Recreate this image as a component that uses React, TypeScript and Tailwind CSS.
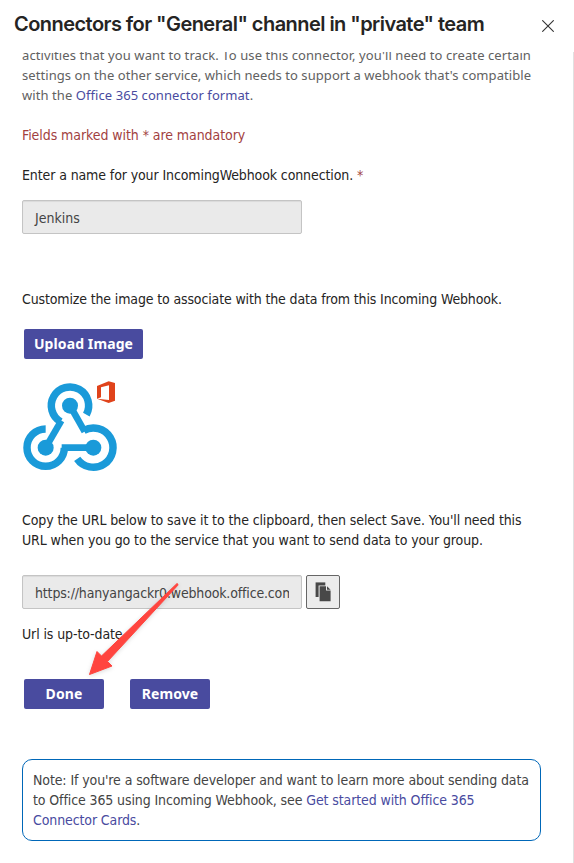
import React from "react";

const body = "font-['DejaVu_Sans_Condensed','DejaVu_Sans',sans-serif] [font-stretch:condensed]";
const human = "font-['Noto_Sans',sans-serif]";

function Line({ className = "", children }: { className?: string; children: React.ReactNode }) {
  return (
    <div className="flex h-5 items-center">
      <span className={`whitespace-pre ${className}`}>{children}</span>
    </div>
  );
}

function PrimaryButton({ className = "", children }: { className?: string; children: React.ReactNode }) {
  return (
    <button
      className={`h-[30px] shrink-0 whitespace-nowrap rounded-[2px] bg-[#494b9f] text-center text-sm leading-[30px] font-bold tracking-[0.1px] text-white ${human} ${className}`}
    >
      {children}
    </button>
  );
}

function WebhookLogo() {
  return (
    <svg className="block h-[100px] w-[100px]" viewBox="30 165 300 300" fill="none">
      <g stroke="#1a9ad9" strokeWidth="22.5">
        <path d="M152 305.4 A56 56 0 1 1 229 284" />
        <path d="M221.3 331.4 A59 59 0 1 1 201.6 416.6" />
        <path d="M163 383 A56 56 0 1 1 107 327" />
      </g>
      <g stroke="#1a9ad9" strokeWidth="20">
        <path d="M107 383 L154 302" />
        <path d="M180 257 L224 335" />
        <path d="M250 383 H155" />
      </g>
      <g fill="#1a9ad9">
        <circle cx="180" cy="257" r="24" />
        <circle cx="107" cy="383" r="24" />
        <circle cx="250" cy="383" r="24" />
      </g>
      <path
        fill="#e0431b"
        fillRule="evenodd"
        d="M261 198 L296 184 L315 189 V242 L296 249 L261 236 L297 240 V196 L273 202 V232 L261 236 Z"
      />
    </svg>
  );
}

function CopyIcon() {
  return (
    <svg className="h-5 w-4" viewBox="0 0 16 20">
      <path d="M0.6 0.4 H10.3 V15 H0.6 Z" fill="#484848" />
      <path d="M3.6 3.4 H11.6 L16 7.8 V19.4 H4.6 V15.6 H3.6 Z" fill="#ececec" />
      <path d="M4.6 4.3 H11 V8.6 H15.6 V19.2 H4.6 Z" fill="#484848" />
      <path d="M12 4.3 L15.6 7.8 H12 Z" fill="#484848" />
    </svg>
  );
}

export default function App() {
  return (
    <div className={`relative flex h-[863px] w-[574px] flex-col overflow-hidden bg-white text-sm tracking-[-0.11px] text-[#252423] ${body}`}>
      <header className="flex h-[52px] shrink-0 items-start justify-between pt-[10px] pr-5 pl-[14px]">
        <h1 className="whitespace-nowrap font-['Inter',sans-serif] text-[20px] leading-7 font-semibold tracking-[-0.55px]">
          Connectors for "General" channel in "private" team
        </h1>
        <svg className="mt-[10px] h-3 w-3" viewBox="0 0 12 12">
          <path d="M0.3 0.3 L11.7 11.7 M11.7 0.3 L0.3 11.7" stroke="#333" strokeWidth="1.1" />
        </svg>
      </header>
      <main className="flex min-h-0 flex-1 flex-col overflow-hidden border-r border-[#e1e1e1] pl-[22px]">
        <div className={`-mt-[7px] text-[13px] tracking-[0.07px] text-[#616161] ${human}`}>
          <Line className="tracking-[0.09px]">
            activities that you want to track. To use this connector, you'll need to create certain
          </Line>
          <Line>settings on the other service, which needs to support a webhook that's compatible</Line>
          <Line>
            with the <a className="text-[#494b9f]">Office 365 connector format</a>.
          </Line>
        </div>
        <div className="mt-5 text-[#a23f3f]">
          <Line className="tracking-[-0.07px]">Fields marked with * are mandatory</Line>
        </div>
        <div className="mt-5">
          <Line>
            Enter a name for your IncomingWebhook connection. <span className="text-[#a23f3f]">*</span>
          </Line>
        </div>
        <div className="mt-[15px] flex h-[34px] w-[280px] shrink-0 items-center rounded-[2px] border border-[#c4c4c4] bg-[#eaeaea] pt-0.5 pl-3 text-[#444] shadow-[inset_0_1px_1px_rgba(0,0,0,0.07)]">
          <span className="tracking-normal">Jenkins</span>
        </div>
        <div className="mt-[55px]">
          <Line className="tracking-[-0.14px]">
            Customize the image to associate with the data from this Incoming Webhook.
          </Line>
        </div>
        <div className="mt-5 flex pl-[2px]">
          <PrimaryButton className="w-[119px]">Upload Image</PrimaryButton>
        </div>
        <div className="-ml-[2px] mt-4 h-[100px] shrink-0">
          <WebhookLogo />
        </div>
        <div className="mt-[35px]">
          <Line>Copy the URL below to save it to the clipboard, then select Save. You'll need this</Line>
          <Line>URL when you go to the service that you want to send data to your group.</Line>
        </div>
        <div className="mt-[25px] flex gap-1">
          <div className="flex h-[34px] w-[280px] items-center rounded-[2px] border border-[#c4c4c4] bg-[#eaeaea] px-3 pt-0.5 text-[#444] shadow-[inset_0_1px_1px_rgba(0,0,0,0.07)]">
            <span className="w-[254px] overflow-hidden whitespace-nowrap tracking-[-0.16px]">
              https://hanyangackr0.webhook.office.com
            </span>
          </div>
          <button className="flex h-[34px] w-[34px] items-center justify-center rounded-[2px] border border-[#666] bg-[#ececec]">
            <CopyIcon />
          </button>
        </div>
        <div className="mt-[15px]">
          <Line>Url is up-to-date.</Line>
        </div>
        <div className="mt-[35px] flex gap-[26px] pl-[2px]">
          <PrimaryButton className="w-20">Done</PrimaryButton>
          <PrimaryButton className="w-20">Remove</PrimaryButton>
        </div>
        <div className="mt-[50px] h-[82px] w-[519px] shrink-0 rounded-[10px] border border-[#0067b8] pt-[10px] pl-[10px] text-[#444]">
          <Line>Note: If you're a software developer and want to learn more about sending data</Line>
          <Line>
            to Office 365 using Incoming Webhook, see <a className="text-[#494b9f]">Get started with Office 365</a>
          </Line>
          <Line>
            <a className="text-[#494b9f]">Connector Cards</a>.
          </Line>
        </div>
      </main>
      <svg className="absolute top-[575px] left-[80px] h-[110px] w-[110px] drop-shadow-[0_1px_2px_rgba(0,0,0,0.15)]" viewBox="80 575 110 110">
        <path
          d="M177 583.5 Q178.5 584 177.8 585.3 L107.5 661.5 L112 666 L89.5 674.5 L97 651.5 L101.5 656 Z"
          fill="#ff453f"
          stroke="#ff453f"
          strokeLinejoin="round"
        />
      </svg>
    </div>
  );
}
